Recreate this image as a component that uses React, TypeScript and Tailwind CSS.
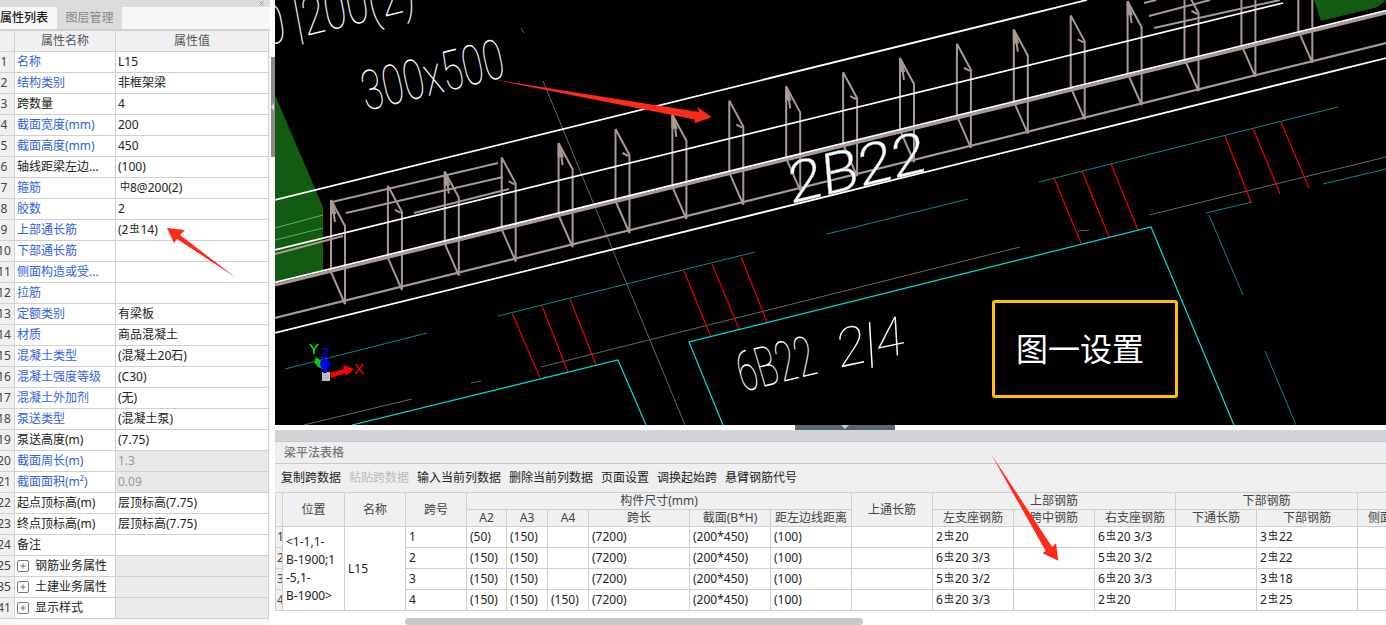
import { Plus, X } from "lucide-react";

const font = "font-['Noto_Sans','Noto_Sans_CJK_SC',sans-serif]";

const props = [
  { no: 1, name: "名称", value: "L15", blue: true },
  { no: 2, name: "结构类别", value: "非框架梁", blue: true },
  { no: 3, name: "跨数量", value: "4" },
  { no: 4, name: "截面宽度(mm)", value: "200", blue: true },
  { no: 5, name: "截面高度(mm)", value: "450", blue: true },
  { no: 6, name: "轴线距梁左边...", value: "(100)" },
  { no: 7, name: "箍筋", value: "stirrup", blue: true },
  { no: 8, name: "胶数", value: "2", blue: true },
  { no: 9, name: "上部通长筋", value: "top", blue: true },
  { no: 10, name: "下部通长筋", value: "", blue: true },
  { no: 11, name: "侧面构造或受...", value: "", blue: true },
  { no: 12, name: "拉筋", value: "", blue: true },
  { no: 13, name: "定额类别", value: "有梁板", blue: true },
  { no: 14, name: "材质", value: "商品混凝土", blue: true },
  { no: 15, name: "混凝土类型", value: "(混凝土20石)", blue: true },
  { no: 16, name: "混凝土强度等级", value: "(C30)", blue: true },
  { no: 17, name: "混凝土外加剂", value: "(无)", blue: true },
  { no: 18, name: "泵送类型", value: "(混凝土泵)", blue: true },
  { no: 19, name: "泵送高度(m)", value: "(7.75)" },
  { no: 20, name: "截面周长(m)", value: "1.3", blue: true, grey: true },
  { no: 21, name: "截面面积(m²)", value: "0.09", blue: true, grey: true },
  { no: 22, name: "起点顶标高(m)", value: "层顶标高(7.75)" },
  { no: 23, name: "终点顶标高(m)", value: "层顶标高(7.75)" },
  { no: 24, name: "备注", value: "" },
];

const groups = [
  { no: 25, name: "钢筋业务属性" },
  { no: 35, name: "土建业务属性" },
  { no: 41, name: "显示样式" },
];

const toolbar = ["复制跨数据", "粘贴跨数据", "输入当前列数据", "删除当前列数据", "页面设置", "调换起始跨", "悬臂钢筋代号"];

const spans = [
  { no: 1, a2: "(50)", a3: "(150)", a4: "", left: [2, "20"], right: [6, "20 3/3"], bottom: [3, "22"] },
  { no: 2, a2: "(150)", a3: "(150)", a4: "", left: [6, "20 3/3"], right: [5, "20 3/2"], bottom: [2, "22"] },
  { no: 3, a2: "(150)", a3: "(150)", a4: "", left: [5, "20 3/2"], right: [6, "20 3/3"], bottom: [3, "18"] },
  { no: 4, a2: "(150)", a3: "(150)", a4: "(150)", left: [6, "20 3/3"], right: [2, "20"], bottom: [2, "25"] },
];

// CAD drawing data, in page coordinates
const teal = [
  [498, 316, 755, 252], [1039, 182, 1338, 107], [285, 369, 427, 333], [827, 234, 968, 199],
  [1323, 184, 1386, 169], [1206, 213, 1252, 202], [1209, 215, 1243, 295], [1265, 351, 1296, 425],
];
const cyan = ["352,425 618,360 646,425", "723,425 689,342 1151,227 1234,425"];
const red = [
  [512, 313, 540, 378], [542, 306, 568, 372], [570, 299, 596, 365], [684, 271, 711, 337],
  [712, 264, 739, 329], [741, 257, 767, 322], [1054, 178, 1081, 243], [1082, 171, 1109, 237],
  [1111, 164, 1138, 230], [1225, 136, 1251, 202], [1253, 128, 1280, 194], [1281, 122, 1309, 188],
];
const grey = [
  [543, 81, 685, 425], [521, 28, 524, 33], [541, 367, 1020, 247], [1078, 231, 1089, 230],
  [1149, 215, 1386, 157], [471, 383, 481, 381], [304, 425, 412, 399],
];
const bars = [
  [332, 202, 498, 163], [346, 213, 503, 177], [414, 213, 509, 189], [275, 254, 343, 236],
  [1144, 3, 1156, 0], [1149, 16, 1210, 0], [1154, 28, 1280, 0],
];

function Stirrup({ i }: { i: number }) {
  const x = 331 + 56.9 * i;
  const top = 200 - 14.2 * i;
  return (
    <g fill="none" stroke="#a89a92" strokeWidth={2}>
      <path d={`M${x} ${top}V${top + 72}L${x + 14} ${top + 104}V${top + 26}L${x} ${top}`} />
      {i % 2 === 0 ? (
        <path d={`M${x} ${top}L${x + 4} ${top + 13}L${x} ${top + 13}ZM${x + 2} ${top + 8}L${x + 4} ${top + 22}`} fill="#a89a92" />
      ) : (
        <path d={`M${x + 7} ${top + 24}L${x + 13} ${top + 27}`} />
      )}
    </g>
  );
}

function CadCanvas() {
  return (
    <svg viewBox="275 0 1111 425" className="block w-[1111px] h-[425px] bg-black">
      <polygon points="275,95 323,207 323,270 275,282" fill="#115c11" />
      <polygon points="1314,0 1386,0 1378,7 1321,21" fill="#115c11" />
      <path d="M275 228L323 215M275 240L323 228" stroke="#5cb85c" strokeWidth={1} />
      {grey.map((l, i) => <line key={i} x1={l[0]} y1={l[1]} x2={l[2]} y2={l[3]} stroke="#666" strokeWidth={1} />)}
      {teal.map((l, i) => <line key={i} x1={l[0]} y1={l[1]} x2={l[2]} y2={l[3]} stroke="#008b8b" strokeWidth={1} />)}
      {red.map((l, i) => <line key={i} x1={l[0]} y1={l[1]} x2={l[2]} y2={l[3]} stroke="#f00000" strokeWidth={1.2} />)}
      {cyan.map((p, i) => <polyline key={i} points={p} fill="none" stroke="#00e0e0" strokeWidth={1.2} />)}
      {bars.map((l, i) => <line key={i} x1={l[0]} y1={l[1]} x2={l[2]} y2={l[3]} stroke="#a89a92" strokeWidth={2} />)}
      <line x1={275} y1={318} x2={1386} y2={43} stroke="#a89a92" strokeWidth={2.2} />
      <line x1={275} y1={285} x2={1386} y2={13} stroke="#a89a92" strokeWidth={3} />
      {Array.from({ length: 18 }, (_, i) => <Stirrup key={i} i={i} />)}
      <line x1={275} y1={200} x2={1087} y2={0} stroke="#fff" strokeWidth={1.8} />
      <line x1={275} y1={250} x2={1283} y2={3} stroke="#fff" strokeWidth={1.8} />
      <line x1={275} y1={282.5} x2={1386} y2={10.5} stroke="#fff" strokeWidth={1.8} />
      <line x1={275} y1={333} x2={1386} y2={58} stroke="#fff" strokeWidth={1.8} />
      <g fontFamily="Roboto, sans-serif" fontWeight={100} fill="#fff" fontSize={40}>
        <text transform="matrix(0.94,-0.23,0.3,1.35,366,111)">300x500</text>
        <text transform="matrix(1,-0.245,0.25,1.35,266,46)">0 |200(2)</text>
        <text transform="matrix(0.85,-0.21,0.4,1.35,743,392)">6B22</text>
        <text transform="matrix(1.3,-0.28,0.08,1.35,838,368)">2|4</text>
      </g>
      <text transform="matrix(1.2,-0.29,0.1,1.15,790,204)" fontFamily="Roboto, sans-serif" fontWeight={300} fontSize={50} fill="#fff" stroke="#8aa" strokeWidth={0.3}>2B22</text>
      {/* axis gizmo */}
      <rect x={322} y={372} width={8} height={9} fill="#bbb" />
      <polygon points="330,373 344,369 343,365 354,369 346,376 345,373 331,378" fill="#f00" />
      <polygon points="314,362 316,357 323,362 323,369 318,367" fill="#0c0" />
      <circle cx={325} cy={364} r={5} fill="#00f" />
      <rect x={323} y={366} width={4} height={7} fill="#00f" />
      <g fontFamily="'Liberation Sans', sans-serif" fontSize={15}>
        <text x={309} y={354} fill="#0f0">Y</text>
        <text x={321} y={358} fill="#00f">Z</text>
        <text x={354} y={374} fill="#f00">X</text>
      </g>
    </svg>
  );
}

function PropertyPanel() {
  return (
    <div className="w-[270px] shrink-0 h-full bg-[#f7f7f7] overflow-hidden">
      <div className="h-[7px] bg-[#dcdcdf] flex justify-end pr-[5px]">
        <X size={7} className="text-[#777]" strokeWidth={2} />
      </div>
      <div className="h-[23px] flex -ml-[8px] border-b border-[#d0d0d0] text-xs leading-[22px]">
        <div className="w-[64px] text-center text-[#222] font-medium">属性列表</div>
        <div className="w-[65px] text-center text-[#888] bg-[#dcdcdc] ml-px">图层管理</div>
      </div>
      <table className="table-fixed border-collapse -ml-[7px] w-[275px] text-xs">
        <colgroup>
          <col className="w-[21px]" />
          <col className="w-[101px]" />
          <col className="w-[153px]" />
        </colgroup>
        <thead>
          <tr className="h-[21px] bg-[#f0f0f0] text-[#555]">
            <th className="border border-[#d0d0d0] font-normal"></th>
            <th className="border border-[#d0d0d0] font-normal">属性名称</th>
            <th className="border border-[#d0d0d0] font-normal">属性值</th>
          </tr>
        </thead>
        <tbody>
          {props.map((p) => (
            <tr key={p.no} className="h-[21px]">
              <td className="border border-[#d0d0d0] bg-[#f0f0f0] text-center text-[#444] p-0 whitespace-nowrap">{p.no}</td>
              <td className={`border border-[#d0d0d0] bg-white pl-[2px] p-0 whitespace-nowrap overflow-hidden ${p.blue ? "text-[#2f62e6]" : "text-[#222]"}`}>{p.name}</td>
              <td className={`border border-[#d0d0d0] pl-[2px] p-0 whitespace-nowrap ${p.grey ? "bg-[#e8e8e8] text-[#999]" : "bg-white text-[#222]"}`}>
                {p.value === "stirrup" ? (
                  <>
                    <span className="text-[10px] relative -top-[2px] ml-[2px]">中</span>8@200(2)
                  </>
                ) : p.value === "top" ? (
                  <>
                    (2<span className="text-[10px] relative -top-[2px] mx-[1px]">虫</span>14)
                  </>
                ) : (
                  p.value
                )}
              </td>
            </tr>
          ))}
          {groups.map((g) => (
            <tr key={g.no} className="h-[21px]">
              <td className="border border-[#d0d0d0] bg-[#f0f0f0] text-center text-[#444] p-0">{g.no}</td>
              <td className="border border-[#d0d0d0] bg-white p-0 pl-[2px] text-[#222] whitespace-nowrap">
                <span className="flex items-center gap-[6px]">
                  <span className="w-[12px] h-[12px] border border-[#777] rounded-[2px] flex items-center justify-center">
                    <Plus size={8} strokeWidth={2} className="text-[#333]" />
                  </span>
                  {g.name}
                </span>
              </td>
              <td className="border border-[#d0d0d0] bg-[#ebebeb] p-0"></td>
            </tr>
          ))}
        </tbody>
      </table>
    </div>
  );
}

const th = "border border-[#cfcfcf] bg-[#f0f0f0] text-[#444] font-normal p-0 leading-[16px] whitespace-nowrap overflow-hidden";
const td = "border border-[#cfcfcf] bg-white text-[#222] pl-[3px] pr-0 py-0 whitespace-nowrap";

function Rebar({ v }: { v: (string | number)[] }) {
  return (
    <>
      {v[0]}
      <span className="text-[10px] relative -top-[2px] mx-[1px]">虫</span>
      {v[1]}
    </>
  );
}

function SpanTable() {
  return (
    <div className="overflow-hidden h-[119px]">
      <table className="table-fixed border-collapse w-[1210px] text-xs">
        <colgroup>
          <col className="w-[7px]" />
          <col className="w-[62px]" />
          <col className="w-[61px]" />
          <col className="w-[61px]" />
          <col className="w-[40px]" />
          <col className="w-[41px]" />
          <col className="w-[41px]" />
          <col className="w-[101px]" />
          <col className="w-[81px]" />
          <col className="w-[81px]" />
          <col className="w-[81px]" />
          <col className="w-[81px]" />
          <col className="w-[81px]" />
          <col className="w-[81px]" />
          <col className="w-[81px]" />
          <col className="w-[101px]" />
          <col className="w-[81px]" />
          <col className="w-[47px]" />
        </colgroup>
        <thead>
          <tr className="h-[17px]">
            <th rowSpan={2} className={`${th} bg-[#dcdcdc]`}></th>
            <th rowSpan={2} className={th}>位置</th>
            <th rowSpan={2} className={th}>名称</th>
            <th rowSpan={2} className={th}>跨号</th>
            <th colSpan={6} className={th}>构件尺寸(mm)</th>
            <th rowSpan={2} className={th}>上通长筋</th>
            <th colSpan={3} className={th}>上部钢筋</th>
            <th colSpan={2} className={th}>下部钢筋</th>
            <th colSpan={2} className={th}></th>
          </tr>
          <tr className="h-[17px]">
            <th className={th}>A2</th>
            <th className={th}>A3</th>
            <th className={th}>A4</th>
            <th className={th}>跨长</th>
            <th className={th}>截面(B*H)</th>
            <th className={th}>距左边线距离</th>
            <th className={th}>左支座钢筋</th>
            <th className={th}>跨中钢筋</th>
            <th className={th}>右支座钢筋</th>
            <th className={th}>下通长筋</th>
            <th className={th}>下部钢筋</th>
            <th className={th}>侧面通长筋</th>
            <th className={th}></th>
          </tr>
        </thead>
        <tbody>
          {spans.map((s, i) => (
            <tr key={s.no} className="h-[21px]">
              <td className="border border-[#cfcfcf] bg-[#f0f0f0] text-[#444] p-0 pl-[1px] overflow-hidden">{s.no}</td>
              {i === 0 && (
                <td rowSpan={4} className={`${td} leading-[18px] align-middle`}>
                  &lt;1-1,1-<br />B-1900;1<br />-5,1-<br />B-1900&gt;
                </td>
              )}
              {i === 0 && <td rowSpan={4} className={td}>L15</td>}
              <td className={td}>{s.no}</td>
              <td className={td}>{s.a2}</td>
              <td className={td}>{s.a3}</td>
              <td className={td}>{s.a4}</td>
              <td className={td}>(7200)</td>
              <td className={td}>(200*450)</td>
              <td className={td}>(100)</td>
              <td className={td}></td>
              <td className={td}><Rebar v={s.left} /></td>
              <td className={td}></td>
              <td className={td}><Rebar v={s.right} /></td>
              <td className={td}></td>
              <td className={td}><Rebar v={s.bottom} /></td>
              <td className={td}></td>
              <td className={td}></td>
            </tr>
          ))}
        </tbody>
      </table>
    </div>
  );
}

export default function App() {
  return (
    <div className={`relative w-[1386px] h-[625px] overflow-hidden bg-[#f7f7f7] flex ${font}`}>
      <PropertyPanel />

      {/* splitter between the panels */}
      <div className="w-[5px] shrink-0 bg-white">
        <div className="mt-[57px] ml-px h-[100px] bg-[#8a8a8a] flex items-center">
          <span className="w-0 h-0 border-y-[4px] border-y-transparent border-r-[3px] border-r-[#ddd]" />
        </div>
      </div>

      <div className="w-[1111px] shrink-0 flex flex-col">
        <CadCanvas />
        <div className="h-[5px] bg-white pl-[520px]">
          <div className="w-[100px] h-[5px] bg-[#5d6670] flex justify-center">
            <span className="w-0 h-0 border-x-[4px] border-x-transparent border-t-[4px] border-t-[#ccc]" />
          </div>
        </div>
        <div className="h-[11px] bg-[#d3d4d8]" />
        <div className="h-[23px] bg-[#eeeeee] border-y border-[#c8c8cc] pl-[9px] text-xs leading-[21px] text-[#777] font-medium">梁平法表格</div>
        <div className="h-[28px] bg-[#efefef] flex items-center gap-[8px] pl-[6px] text-xs text-[#222]">
          {toolbar.map((t) => (
            <span key={t} className={t === "粘贴跨数据" ? "text-[#bbb]" : ""}>{t}</span>
          ))}
        </div>
        <SpanTable />
        <div className="flex-1 bg-white">
          <div className="ml-[130px] mt-[7px] w-[458px] h-[7px] rounded-full bg-[#c9c9c9]" />
        </div>
      </div>

      {/* note box over the drawing */}
      <div className="absolute left-[992px] top-[300px] w-[186px] h-[98px] border-[3px] border-[#ffc000] rounded-[3px] flex items-center justify-center pr-[10px] text-[32px] text-white">
        图一设置
      </div>

      {/* red arrows marked on the screenshot */}
      <svg className="absolute left-0 top-0 pointer-events-none" width={1386} height={625}>
        <polygon points="491,79 699,112 697.3,106.7 711.7,117.3 694.3,123.3 695,119.5" fill="#ff2a1a" />
        <polygon points="167,228 185,230 180,235 235,277 177,239 174,243" fill="#ff2a1a" />
        <polygon points="991,454 1052,546.7 1056,543.3 1058.3,560.7 1042.7,553.3 1045.7,551" fill="#ff2a1a" />
      </svg>
    </div>
  );
}
